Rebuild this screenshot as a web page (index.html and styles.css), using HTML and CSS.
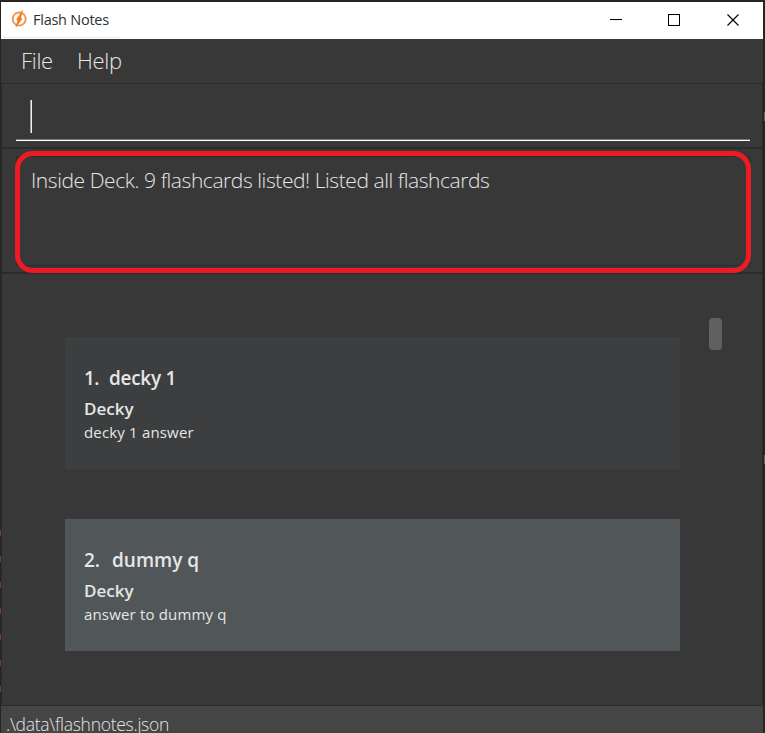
FILE: index.html
```
<!DOCTYPE html>
<html lang="en">
<head>
<meta charset="utf-8">
<title>Flash Notes</title>
<link rel="stylesheet" href="styles.css">
</head>
<body>
<div class="desktop">
  <div class="edge-marks edge-left" aria-hidden="true"><i></i><i></i><i></i><i></i><i></i><i></i><i></i></div>
  <main class="window">
    <header class="titlebar">
      <svg class="logo" width="18" height="20" viewBox="0 0 18 20">
        <circle cx="8.200" cy="10" r="6.500" fill="none" stroke="#eb9c58" stroke-width="2"/>
        <path d="M11.500 1.500 5.600 10.500 6.800 11.500 5 18 10.800 10 9.800 8.500z" fill="#ee8022" stroke="#ee8022" stroke-width=".8"/>
      </svg>
      <span class="app-name">Flash Notes</span>
      <svg class="controls" width="130" height="14" viewBox="0 0 130 14" fill="none" stroke="#000" shape-rendering="crispEdges">
        <path d="M0 6.500h12"/>
        <rect x="58.500" y="1.500" width="11" height="11"/>
        <path d="m117.500 1.500 11 11m0-11-11 11" shape-rendering="auto" stroke-width="1.100"/>
      </svg>
    </header>
    <nav class="menu"><span class="file">File</span><span class="help">Help</span></nav>
    <section class="command"><div class="field"><i class="caret"></i></div></section>
    <section class="result">
      <div class="result-box"><p>Inside Deck. 9 flashcards listed! Listed all flashcards</p></div>
      <div class="highlight"></div>
    </section>
    <section class="list">
      <div class="cards">
        <article class="card">
          <h2><span class="num">1.</span><span class="q1">decky 1</span></h2>
          <h3>Decky</h3>
          <p>decky 1 answer</p>
        </article>
        <article class="card alt">
          <h2><span class="num wide">2.</span><span>dummy q</span></h2>
          <h3>Decky</h3>
          <p>answer to dummy q</p>
        </article>
      </div>
      <div class="thumb"></div>
    </section>
    <footer class="status"><span>.\data\flashnotes.json</span></footer>
  </main>
  <div class="edge-marks edge-right" aria-hidden="true"><i></i><i></i></div>
</div>
</body>
</html>
```
FILE: styles.css
```
* { box-sizing: border-box; margin: 0; padding: 0; }
body {
  width: 765px;
  height: 733px;
  overflow: hidden;
  background: #262525;
  color: #e6e6e6;
  font-family: "Open Sans", "Noto Sans", sans-serif;
}
.desktop { position: relative; height: 733px; padding: 2px 2px 0 1px; }
.window { display: flex; flex-direction: column; height: 731px; background: #383838; }
.titlebar {
  display: flex;
  align-items: center;
  flex: none;
  height: 37px;
  padding: 0 23px 0 10px;
  background: linear-gradient(#ebebeb, #ebebeb) 2px 35px / 118px 1px no-repeat #fff;
}
.logo { flex: none; margin-top: -3px; }
.app-name {
  flex: 1;
  margin: -3px 0 0 4px;
  color: #303030;
  font-size: 14.500px;
  letter-spacing: -0.250px;
  white-space: nowrap;
}
.controls { flex: none; margin-top: -2px; }
.menu { display: flex; flex: none; height: 44px; padding-left: 20px; font-size: 22px; font-weight: 300; line-height: 43px; letter-spacing: -0.300px; }
.file { width: 56px; }
.command { flex: none; height: 64px; padding: 0 12px 0 14px; border: solid #2b2b2b; border-width: 1px 1px 0; }
.field { height: 57px; padding: 16px 0 0 14px; border-bottom: 1px solid #fff; box-shadow: inset 0 -1px #777; }
.caret { display: block; width: 2px; height: 33px; background: linear-gradient(90deg, #999 50%, #f0f0f0 50%); }
.result {
  position: relative;
  flex: none;
  height: 125px;
  padding: 7px 12px 0 14px;
  border: solid #2b2b2b;
  border-width: 2px 1px 0;
}
.result-box {
  height: 110px;
  padding: 9px 0 0 14px;
  border: 1px solid #2b2b2b;
  font-size: 21px;
  font-weight: 300;
  line-height: 29px;
  letter-spacing: -0.430px;
  white-space: nowrap;
}
.highlight { position: absolute; inset: 2px 11px -1px 13px; border: 5px solid #ed1c24; border-radius: 18px; z-index: 1; }
.list {
  display: flex;
  flex: none;
  height: 433px;
  border: solid #2b2b2b;
  border-width: 2px 1px 0;
}
.cards { display: flex; flex-direction: column; gap: 50px; width: 615px; margin: 63px 0 0 63px; }
.card { height: 132px; padding: 27px 19px; background: #3c3e3f; }
.card.alt { background: #515658; }
.card h2 { display: flex; height: 31px; font-size: 19px; font-weight: 600; line-height: 29px; }
.num { width: 25px; letter-spacing: -0.500px; }
.num.wide { width: 28px; letter-spacing: 0; }
.q1 { letter-spacing: -0.300px; }
.card h3 { height: 25px; font-size: 17px; font-weight: 600; line-height: 27px; }
.card p { font-size: 15px; line-height: 24px; letter-spacing: 0.170px; }
.thumb { width: 13px; height: 32px; margin: 44px 0 0 29px; border-radius: 4px; background: #606060; }
.status { flex: 1; padding: 10px 0 0 5px; border-top: 1px solid #2b2b2b; background: #454545; }
.status span { display: block; font-size: 17.500px; font-weight: 300; line-height: 17px; letter-spacing: -0.270px; white-space: nowrap; }
.edge-marks { position: absolute; width: 1px; }
.edge-left { left: 0; top: 530px; display: grid; gap: 20px; }
.edge-left i { width: 1px; height: 6px; background: #7a3a37; }
.edge-right { right: 0; top: 112px; display: grid; gap: 334px; }
.edge-right i { width: 1px; height: 9px; background: #666; }
```
